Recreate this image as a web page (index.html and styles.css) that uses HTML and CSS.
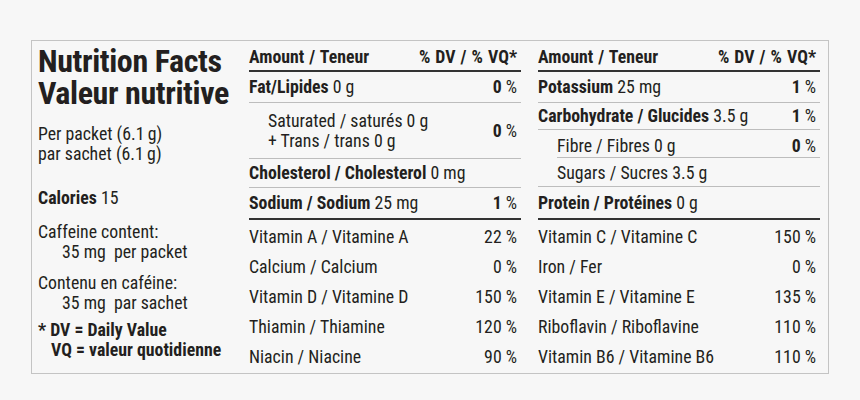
FILE: index.html
```html
<!DOCTYPE html>
<html lang="en">
<head>
<meta charset="utf-8">
<title>Nutrition Facts</title>
<link rel="stylesheet" href="styles.css">
</head>
<body>
<div class="label">
  <div class="col-left">
    <h1 class="title">Nutrition Facts<br>Valeur nutritive</h1>
    <p class="serving">Per packet (6.1&#8201;g)<br>par sachet (6.1&#8201;g)</p>
    <p class="calories"><b>Calories</b> 15</p>
    <p class="caffeine">Caffeine content:<br><span class="ind">35 mg&nbsp; per packet</span></p>
    <p class="caffeine2">Contenu en caféine:<br><span class="ind">35 mg&nbsp; par sachet</span></p>
    <p class="dv"><b>* DV = Daily Value</b><br><b class="ind2">VQ = valeur quotidienne</b></p>
  </div>

  <div class="col">
    <div class="row head"><span>Amount / Teneur</span><span>% DV / % VQ*</span></div>
    <div class="row r-fat"><span><b>Fat/Lipides</b> 0 g</span><span class="pct"><b>0</b> %</span></div>
    <div class="row r-sat"><span>Saturated / saturés 0 g<br>+ Trans / trans 0 g</span><span class="pct"><b>0</b> %</span></div>
    <div class="row r-chol"><span><b>Cholesterol / Cholesterol</b> 0 mg</span></div>
    <div class="row r-sod thick"><span><b>Sodium / Sodium</b> 25 mg</span><span class="pct"><b>1</b> %</span></div>
    <div class="vits">
      <div class="row vit"><span>Vitamin A / Vitamine A</span><span class="pct">22 %</span></div>
      <div class="row vit"><span>Calcium / Calcium</span><span class="pct">0 %</span></div>
      <div class="row vit"><span>Vitamin D / Vitamine D</span><span class="pct">150 %</span></div>
      <div class="row vit"><span>Thiamin / Thiamine</span><span class="pct">120 %</span></div>
      <div class="row vit"><span>Niacin / Niacine</span><span class="pct">90 %</span></div>
    </div>
  </div>

  <div class="col">
    <div class="row head"><span>Amount / Teneur</span><span>% DV / % VQ*</span></div>
    <div class="row r-pot"><span><b>Potassium</b> 25 mg</span><span class="pct"><b>1</b> %</span></div>
    <div class="row r-carb"><span><b>Carbohydrate / Glucides</b> 3.5 g</span><span class="pct"><b>1</b> %</span></div>
    <div class="row r-fib"><span>Fibre / Fibres 0 g</span><span class="pct"><b>0</b> %</span></div>
    <div class="row r-sug"><span class="subtext">Sugars / Sucres 3.5 g</span></div>
    <div class="row r-prot thick"><span><b>Protein / Protéines</b> 0 g</span></div>
    <div class="vits">
      <div class="row vit"><span>Vitamin C / Vitamine C</span><span class="pct">150 %</span></div>
      <div class="row vit"><span>Iron / Fer</span><span class="pct">0 %</span></div>
      <div class="row vit"><span>Vitamin E / Vitamine E</span><span class="pct">135 %</span></div>
      <div class="row vit"><span>Riboflavin / Riboflavine</span><span class="pct">110 %</span></div>
      <div class="row vit"><span>Vitamin B6 / Vitamine B6</span><span class="pct">110 %</span></div>
    </div>
  </div>
</div>
</body>
</html>
```

FILE: styles.css
```css
html, body {
  margin: 0;
  padding: 0;
  background: #f7f7f7;
}
body {
  font-family: "Roboto", "Liberation Sans", sans-serif;
  font-stretch: 80%;
  color: #231f20;
  font-size: 17.8px;
  line-height: 20px;
}
.label {
  margin: 40px 0 0 31px;
  width: 798px;
  height: 334px;
  box-sizing: border-box;
  border: 1px solid #c4c4c4;
  padding: 0 8px 0 6px;
  display: grid;
  grid-template-columns: 194px 272px 282px;
  column-gap: 17px;
}
b { font-weight: bold; }
p, h1 { margin: 0; }

.title {
  font-size: 32px;
  line-height: 32px;
  font-weight: bold;
  letter-spacing: -0.4px;
  margin-top: 4px;
  white-space: nowrap;
}
.serving { margin-top: 15px; }
.calories { margin-top: 24px; }
.caffeine { margin-top: 14px; }
.caffeine2 { margin-top: 11px; }
.dv { margin-top: 7px; white-space: nowrap; }
.ind { padding-left: 24px; }
.ind2 { padding-left: 13px; }

.col {
  display: flex;
  flex-direction: column;
}
.row {
  display: flex;
  justify-content: space-between;
  align-items: center;
  box-sizing: border-box;
  border-bottom: 1px solid #bdbdbd;
  padding-right: 4px;
  white-space: nowrap;
}
.head {
  font-weight: bold;
  word-spacing: 1px;
  height: 31px;
  padding-top: 3px;
  border-bottom: 2px solid #333;
}
.r-fat, .r-pot { height: 31px; }
.r-sat { height: 56px; padding-left: 19px; }
.r-chol { height: 29px; }
.r-sod { height: 32px; }
.r-prot { height: 33px; }
.r-carb { height: 27px; }
.r-fib { height: 28px; padding-top: 5px; margin-left: 19px; }
.r-sug { height: 29px; padding-top: 2px; }
.subtext { padding-left: 19px; }
.thick { border-bottom: 2px solid #333; }
.vits { padding-top: 2px; }
.vit {
  height: 30px;
  border-bottom: none;
}
.pct { white-space: nowrap; }
```
